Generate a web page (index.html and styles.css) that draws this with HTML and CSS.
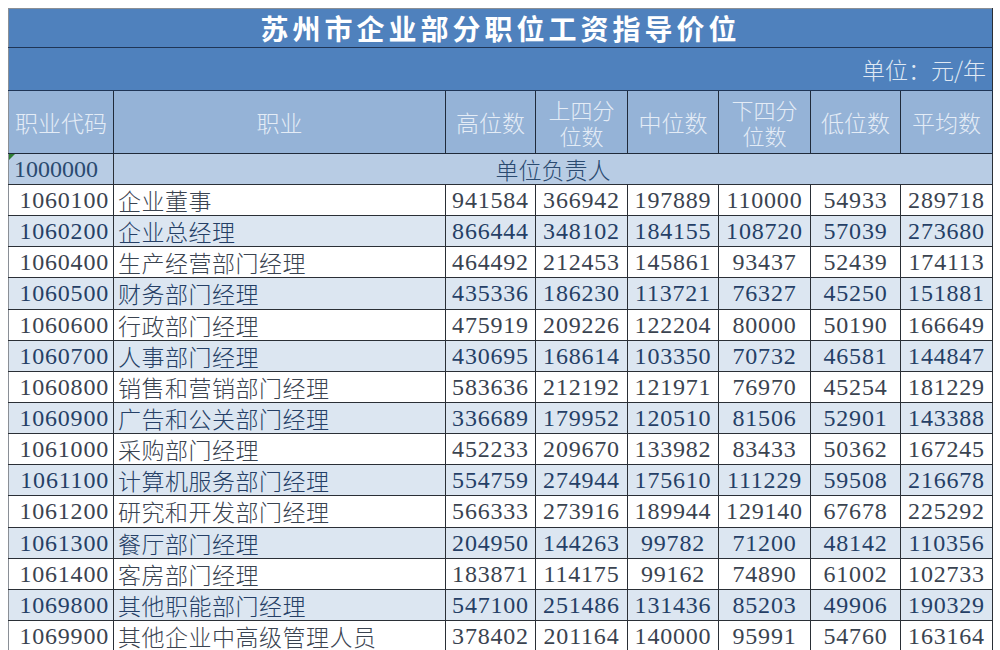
FILE: index.html
```html
<!DOCTYPE html>
<html lang="zh-CN">
<head>
<meta charset="utf-8">
<title>苏州市企业部分职位工资指导价位</title>
<link rel="stylesheet" href="styles.css">
</head>
<body>
<table class="wage">
  <colgroup>
    <col class="c-code"><col class="c-name"><col class="c-n1"><col class="c-n2"><col class="c-n3"><col class="c-n4"><col class="c-n5"><col class="c-n6">
  </colgroup>
  <tr class="title-row"><td colspan="8">苏州市企业部分职位工资指导价位</td></tr>
  <tr class="unit-row"><td colspan="8">单位：元/年</td></tr>
  <tr class="head-row">
    <th>职业代码</th><th>职业</th><th>高位数</th><th><span class="ln">上四分</span><span class="ln">位数</span></th><th>中位数</th><th><span class="ln">下四分</span><span class="ln">位数</span></th><th>低位数</th><th>平均数</th>
  </tr>
  <tr class="group-row"><td class="code"><span class="mark"></span>1000000</td><td colspan="7" class="group-name">单位负责人</td></tr>
  <tr class="odd"><td class="code">1060100</td><td class="name">企业董事</td><td>941584</td><td>366942</td><td>197889</td><td>110000</td><td>54933</td><td>289718</td></tr>
  <tr class="even"><td class="code">1060200</td><td class="name">企业总经理</td><td>866444</td><td>348102</td><td>184155</td><td>108720</td><td>57039</td><td>273680</td></tr>
  <tr class="odd"><td class="code">1060400</td><td class="name">生产经营部门经理</td><td>464492</td><td>212453</td><td>145861</td><td>93437</td><td>52439</td><td>174113</td></tr>
  <tr class="even"><td class="code">1060500</td><td class="name">财务部门经理</td><td>435336</td><td>186230</td><td>113721</td><td>76327</td><td>45250</td><td>151881</td></tr>
  <tr class="odd"><td class="code">1060600</td><td class="name">行政部门经理</td><td>475919</td><td>209226</td><td>122204</td><td>80000</td><td>50190</td><td>166649</td></tr>
  <tr class="even"><td class="code">1060700</td><td class="name">人事部门经理</td><td>430695</td><td>168614</td><td>103350</td><td>70732</td><td>46581</td><td>144847</td></tr>
  <tr class="odd"><td class="code">1060800</td><td class="name">销售和营销部门经理</td><td>583636</td><td>212192</td><td>121971</td><td>76970</td><td>45254</td><td>181229</td></tr>
  <tr class="even"><td class="code">1060900</td><td class="name">广告和公关部门经理</td><td>336689</td><td>179952</td><td>120510</td><td>81506</td><td>52901</td><td>143388</td></tr>
  <tr class="odd"><td class="code">1061000</td><td class="name">采购部门经理</td><td>452233</td><td>209670</td><td>133982</td><td>83433</td><td>50362</td><td>167245</td></tr>
  <tr class="even"><td class="code">1061100</td><td class="name">计算机服务部门经理</td><td>554759</td><td>274944</td><td>175610</td><td>111229</td><td>59508</td><td>216678</td></tr>
  <tr class="odd"><td class="code">1061200</td><td class="name">研究和开发部门经理</td><td>566333</td><td>273916</td><td>189944</td><td>129140</td><td>67678</td><td>225292</td></tr>
  <tr class="even"><td class="code">1061300</td><td class="name">餐厅部门经理</td><td>204950</td><td>144263</td><td>99782</td><td>71200</td><td>48142</td><td>110356</td></tr>
  <tr class="odd"><td class="code">1061400</td><td class="name">客房部门经理</td><td>183871</td><td>114175</td><td>99162</td><td>74890</td><td>61002</td><td>102733</td></tr>
  <tr class="even"><td class="code">1069800</td><td class="name">其他职能部门经理</td><td>547100</td><td>251486</td><td>131436</td><td>85203</td><td>49906</td><td>190329</td></tr>
  <tr class="odd"><td class="code">1069900</td><td class="name">其他企业中高级管理人员</td><td>378402</td><td>201164</td><td>140000</td><td>95991</td><td>54760</td><td>163164</td></tr>
</table>
</body>
</html>
```
FILE: styles.css
```css
html, body {
  margin: 0;
  padding: 0;
  background: #ffffff;
}
body {
  padding: 8px 0 0 8px;
  font-family: "Liberation Serif", "Noto Sans CJK SC", serif;
  overflow: hidden;
}
.wage {
  border-collapse: collapse;
  table-layout: fixed;
  width: 984px;
  font-size: 24px;
}
.c-code { width: 105px; }
.c-name { width: 332px; }
.c-n1 { width: 90px; }
.c-n2 { width: 92px; }
.c-n3 { width: 91px; }
.c-n4 { width: 92px; }
.c-n5 { width: 90px; }
.c-n6 { width: 92px; }

.wage td, .wage th {
  padding: 0;
  border: 1px solid #2a2f36;
  white-space: nowrap;
  overflow: hidden;
}
.title-row td {
  height: 38px;
  background: #4f81bd;
  color: #ffffff;
  font-family: "Noto Sans CJK SC", sans-serif;
  font-weight: 700;
  font-size: 28px;
  letter-spacing: 4px;
  text-align: center;
  line-height: 38px;
  border-top-color: #8a8f96;
  border-left-color: #8a8f96;
  border-bottom-color: #1f3556;
}
.unit-row td {
  height: 42px;
  background: #4f81bd;
  color: #dfe8f3;
  font-family: "Noto Sans CJK SC", sans-serif;
  font-weight: 300;
  font-size: 23px;
  text-align: right;
  padding-right: 6px;
  border-left-color: #8a8f96;
  border-bottom-color: #1f3556;
}
.head-row th {
  height: 62px;
  background: #95b3d7;
  color: #e4ecf6;
  font-family: "Noto Sans CJK SC", sans-serif;
  font-weight: 300;
  font-size: 23px;
  line-height: 27px;
  text-align: center;
  border-color: #1f2a3a;
}
.head-row .ln {
  display: block;
  font-size: 22px;
  line-height: 26px;
  height: 26px;
}
.head-row th:first-child { border-left-color: #8a8f96; }
.group-row td {
  height: 30px;
  background: #b8cce4;
  color: #2a4a70;
  line-height: 30px;
}
.group-row .code {
  position: relative;
  border-left-color: #8a8f96;
  text-align: left;
  padding-left: 5px;
}
.group-name {
  text-align: center;
  font-family: "Noto Sans CJK SC", sans-serif;
  font-weight: 300;
  font-size: 23px;
}
.mark {
  position: absolute;
  left: 0;
  top: 0;
  width: 0;
  height: 0;
  border-top: 6px solid #2e7d32;
  border-right: 6px solid transparent;
}
.odd td, .even td {
  height: 30.15px;
  line-height: 30px;
  text-align: center;
  letter-spacing: 0.8px;
  font-family: "Liberation Serif", serif;
}
.odd td { background: #ffffff; color: #3a4350; }
.even td { background: #dce6f1; color: #253f66; }
.odd td.code, .even td.code {
  text-align: right;
  padding-right: 4px;
  border-left-color: #8a8f96;
}
.odd td.name, .even td.name {
  text-align: left;
  padding-left: 4px;
  font-family: "Noto Sans CJK SC", sans-serif;
  font-weight: 300;
  font-size: 23px;
  letter-spacing: 0.5px;
}
```
